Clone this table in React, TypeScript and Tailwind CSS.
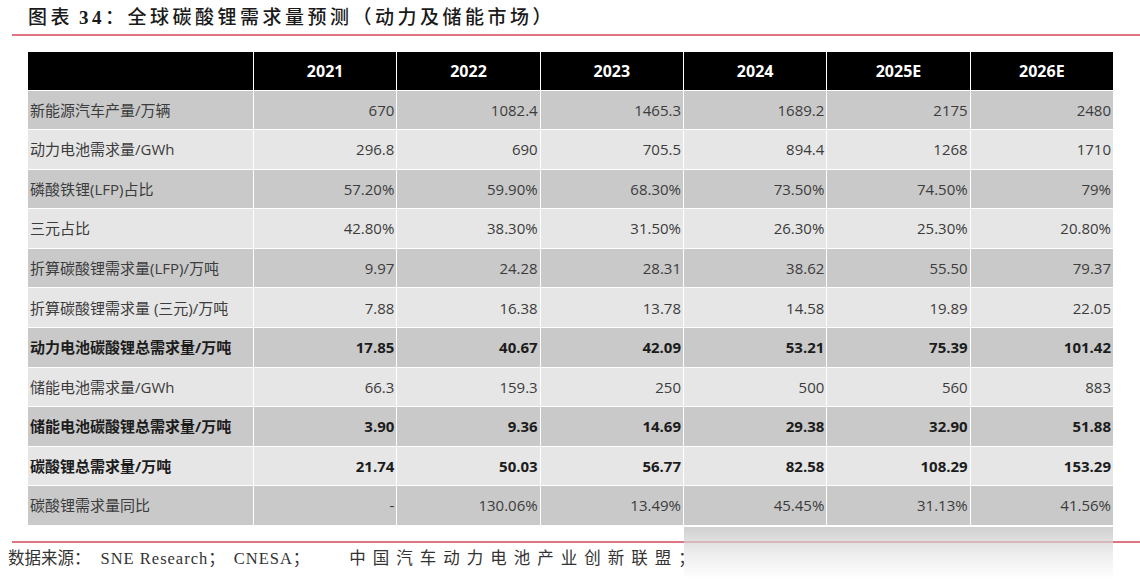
const years = ["2021", "2022", "2023", "2024", "2025E", "2026E"];

type Row = { label: string; values: string[]; bold?: boolean };

const rows: Row[] = [
  { label: "新能源汽车产量/万辆", values: ["670", "1082.4", "1465.3", "1689.2", "2175", "2480"] },
  { label: "动力电池需求量/GWh", values: ["296.8", "690", "705.5", "894.4", "1268", "1710"] },
  { label: "磷酸铁锂(LFP)占比", values: ["57.20%", "59.90%", "68.30%", "73.50%", "74.50%", "79%"] },
  { label: "三元占比", values: ["42.80%", "38.30%", "31.50%", "26.30%", "25.30%", "20.80%"] },
  { label: "折算碳酸锂需求量(LFP)/万吨", values: ["9.97", "24.28", "28.31", "38.62", "55.50", "79.37"] },
  { label: "折算碳酸锂需求量 (三元)/万吨", values: ["7.88", "16.38", "13.78", "14.58", "19.89", "22.05"] },
  { label: "动力电池碳酸锂总需求量/万吨", values: ["17.85", "40.67", "42.09", "53.21", "75.39", "101.42"], bold: true },
  { label: "储能电池需求量/GWh", values: ["66.3", "159.3", "250", "500", "560", "883"] },
  { label: "储能电池碳酸锂总需求量/万吨", values: ["3.90", "9.36", "14.69", "29.38", "32.90", "51.88"], bold: true },
  { label: "碳酸锂总需求量/万吨", values: ["21.74", "50.03", "56.77", "82.58", "108.29", "153.29"], bold: true },
  { label: "碳酸锂需求量同比", values: ["-", "130.06%", "13.49%", "45.45%", "31.13%", "41.56%"] },
];

const cellFont = "font-['Open_Sans','Noto_Sans_CJK_SC',sans-serif]";

export default function App() {
  return (
    <div className="relative h-[579px] w-[1140px] overflow-hidden bg-white">
      {/* title */}
      <div className="flex h-[34px] items-center pl-[28px] pt-[2px] font-['Liberation_Serif','Noto_Sans_CJK_SC',serif] text-[19px] font-medium tracking-[3.5px] text-[#1a1a1a]">
        <span>图表</span>
        <span className="ml-[6px] font-bold">34</span>
        <span>：全球碳酸锂需求量预测（动力及储能市场）</span>
      </div>
      <div className="ml-[12px] h-[1.5px] bg-[#e07483]" />

      {/* table */}
      <div className="ml-[28px] mt-[16px] grid w-[1085px] grid-cols-[225px_repeat(6,1fr)] gap-[1px] bg-white">
        <div className="h-[38px] bg-black" />
        {years.map((y) => (
          <div
            key={y}
            className={`flex h-[38px] items-center justify-center bg-black text-[16px] font-bold text-white ${cellFont}`}
          >
            {y}
          </div>
        ))}
        {rows.map((r, i) => {
          const bg = i % 2 === 0 ? "bg-[#c9c9c9]" : "bg-[#e6e6e6]";
          const txt = r.bold ? "font-bold text-[#1c1c1c]" : "text-[#3c3c3c]";
          return [
            <div
              key={r.label}
              className={`flex h-[38.6px] items-center pl-[2px] text-[15px] ${cellFont} ${bg} ${txt}`}
            >
              {r.label}
            </div>,
            ...r.values.map((v, j) => (
              <div
                key={r.label + j}
                className={`flex h-[38.6px] items-center justify-end pr-[2px] text-[15px] ${cellFont} ${bg} ${txt}`}
              >
                {v}
              </div>
            )),
          ];
        })}
      </div>

      {/* source */}
      <div className="ml-[12px] mt-[16px] h-[1.5px] bg-[#e07483]" />
      <div className="flex h-[34px] items-center pl-[8px] font-['Liberation_Serif','Noto_Sans_CJK_SC',serif] text-[16.5px] text-[#333]">
        <span>数据来源</span>
        <span className="mr-[10px]">：</span>
        <span className="tracking-[1px]">SNE Research</span>
        <span className="mr-[9px]">；</span>
        <span className="tracking-[1px]">CNESA</span>
        <span className="mr-[40px]">；</span>
        <span className="tracking-[7px]">中国汽车动力电池产业创新联盟；</span>
      </div>

      {/* smeared watermark over the bottom right */}
      <div className="absolute left-[684px] top-[527px] h-[52px] w-[429px] bg-gradient-to-b from-[rgba(200,200,200,0.85)] via-[rgba(225,225,225,0.6)] to-[rgba(255,255,255,0.9)]" />
    </div>
  );
}
